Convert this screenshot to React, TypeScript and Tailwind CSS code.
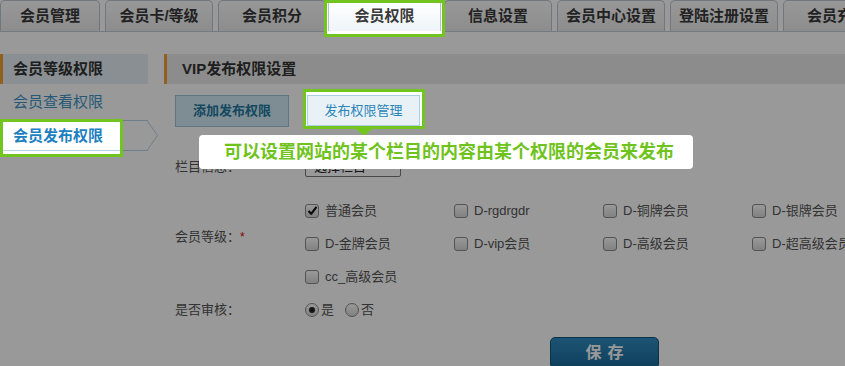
import React from 'react';

function Box({ checked }: { checked?: boolean }) {
  return (
    <span className="w-[14px] h-[14px] rounded-[3px] border border-[#8a8a8a] bg-linear-to-b from-white to-[#d8d8d8] flex items-center justify-center shrink-0">
      {checked && (
        <svg width="11" height="11" viewBox="0 0 11 11">
          <path d="M1.5 6 L4.2 8.8 L9.5 1.8" stroke="#111" strokeWidth="2.2" fill="none" strokeLinejoin="round" />
        </svg>
      )}
    </span>
  );
}

function Radio({ checked }: { checked?: boolean }) {
  return (
    <span className="w-[14px] h-[14px] rounded-full border border-[#8a8a8a] bg-linear-to-b from-white to-[#d8d8d8] flex items-center justify-center shrink-0">
      {checked && <span className="w-[6px] h-[6px] rounded-full bg-[#222]" />}
    </span>
  );
}

function Check({ label, checked }: { label: string; checked?: boolean }) {
  return (
    <div className="w-[149px] flex items-center gap-[6px] whitespace-nowrap">
      <Box checked={checked} />
      <span>{label}</span>
    </div>
  );
}

export default function App() {
  const tabs = ['会员管理', '会员卡/等级', '会员积分', '会员权限', '信息设置', '会员中心设置', '登陆注册设置', '会员充值'];
  return (
    <div className="relative w-[845px] h-[366px] overflow-hidden bg-white font-['Liberation_Sans','Noto_Sans_CJK_SC',sans-serif] text-[13px] text-[#555]">
      {/* tab bar */}
      <div className="flex gap-[5px] h-[32px] border-b border-[#c3ced9] items-end">
        {tabs.map((t, i) => (
          <div
            key={t}
            className={`${i === 0 ? 'w-[100px]' : 'w-[108px]'} shrink-0 h-[31px] rounded-t-[5px] border border-b-0 border-[#bcc6d0] flex items-center justify-center text-[15px] font-bold text-[#3a3a3a] whitespace-nowrap ${
              i === 3 ? 'bg-white' : 'bg-linear-to-b from-[#fdfdfd] to-[#ebebeb]'
            }`}
          >
            {t}
          </div>
        ))}
      </div>

      <div className="flex pt-[22px]">
        {/* sidebar */}
        <div className="w-[148px] shrink-0">
          <div className="h-[30px] bg-[#e4eef6] border-l-[3px] border-[#f0a030] pl-[10px] flex items-center text-[15px] font-bold text-[#333]">
            会员等级权限
          </div>
          <div className="h-[36px] pl-[13px] flex items-center text-[15px] text-[#4095c8]">会员查看权限</div>
          <div className="relative h-[31px] border-y border-[#b9d3e4] bg-white pl-[13px] flex items-center text-[15px] font-bold text-[#1c7fc0]">
            会员发布权限
            <svg className="absolute left-[147px] top-[-1px]" width="12" height="31" viewBox="0 0 12 31">
              <path d="M0 0.5 L10.5 15.5 L0 30.5" stroke="#b9d3e4" strokeWidth="1" fill="white" />
            </svg>
          </div>
        </div>

        {/* main */}
        <div className="ml-[16px] flex-1">
          <div className="h-[30px] bg-[#e9e9e9] border-l-[3px] border-[#f0a030] pl-[15px] flex items-center text-[15px] font-bold text-[#333]">
            VIP发布权限设置
          </div>
          <div className="pl-[11px]">
            <div className="mt-[11px] flex gap-[18px]">
              <div className="w-[114px] h-[32px] bg-[#d3ecf5] border border-[#9cc6d8] flex items-center justify-center font-bold text-[#2277a0]">
                添加发布权限
              </div>
              <div className="w-[113px] h-[31px] bg-[#e8f1f6] border border-[#a9cfe3] flex items-center justify-center text-[#2b84b8]">
                发布权限管理
              </div>
            </div>

            <div className="mt-[30px] h-[20px] flex items-center">
              <div className="w-[130px]">栏目信息：</div>
              <div className="w-[96px] h-[19px] border border-[#7a7a7a] rounded-[2px] pl-[8px] flex items-center text-[#222]">选择栏目</div>
            </div>

            <div className="mt-[17px] flex">
              <div className="w-[130px] pt-[34px] leading-[18px] whitespace-nowrap">
                会员等级：<span className="text-[#d00] align-top text-[12px]">*</span>
              </div>
              <div className="flex flex-col">
                <div className="h-[33px] flex items-center">
                  <Check label="普通会员" checked />
                  <Check label="D-rgdrgdr" />
                  <Check label="D-铜牌会员" />
                  <Check label="D-银牌会员" />
                </div>
                <div className="h-[33px] flex items-center">
                  <Check label="D-金牌会员" />
                  <Check label="D-vip会员" />
                  <Check label="D-高级会员" />
                  <Check label="D-超高级会员" />
                </div>
                <div className="h-[33px] flex items-center">
                  <Check label="cc_高级会员" />
                </div>
              </div>
            </div>

            <div className="h-[33px] flex items-center">
              <div className="w-[130px]">是否审核：</div>
              <div className="flex items-center gap-[2px]">
                <Radio checked />
                <span>是</span>
                <span className="ml-[7px]" />
                <Radio />
                <span>否</span>
              </div>
            </div>

            <div className="mt-[11px] pl-[375px]">
              <div className="w-[109px] h-[32px] rounded-[5px] border border-[#11557a] bg-linear-to-b from-[#2f8cc0] to-[#1a6b9a] flex items-center justify-center text-white font-bold text-[16px] tracking-[6px] pl-[6px]">
                保存
              </div>
            </div>
          </div>
        </div>
      </div>

      {/* guide overlay */}
      <div className="absolute inset-0 bg-black/40 z-10" />

      {/* highlighted tab */}
      <div className="absolute z-20 left-[324px] top-0 w-[121px] h-[37px] border-[3px] border-[#72c51e] bg-white">
        <div className="ml-[1px] w-[113px] h-[28px] border-x border-[#b6c3cf] bg-linear-to-b from-white to-[#eef4f8] flex items-center justify-center text-[15px] font-bold text-[#3a3a3a] pb-[2px]">
          会员权限
        </div>
      </div>

      {/* highlighted sidebar item */}
      <div className="absolute z-20 left-0 top-[119px] w-[123px] h-[38px] border-[3px] border-[#72c51e] bg-white">
        <div className="h-[29px] border-b border-[#b9d3e4] pl-[10px] flex items-center text-[15px] font-bold text-[#1c7fc0]">
          会员发布权限
        </div>
      </div>

      {/* highlighted button */}
      <div className="absolute z-20 left-[303px] top-[89px] w-[122px] h-[40px] border-[3px] border-[#72c51e] bg-white pl-[1px] pt-[3px]">
        <div className="w-[113px] h-[31px] bg-[#e8f1f6] border border-[#a9cfe3] flex items-center justify-center text-[#2b84b8]">
          发布权限管理
        </div>
      </div>
      <div className="absolute z-20 left-[356px] top-[129px] w-0 h-0 border-l-[8px] border-r-[8px] border-t-[7px] border-l-transparent border-r-transparent border-t-[#72c51e]" />

      {/* tooltip */}
      <div className="absolute z-20 left-[199px] top-[135px] w-[494px] h-[34px] rounded-[4px] bg-white pl-[25px] flex items-center text-[18px] font-bold text-[#6fc31c] whitespace-nowrap">
        可以设置网站的某个栏目的内容由某个权限的会员来发布
      </div>
    </div>
  );
}
